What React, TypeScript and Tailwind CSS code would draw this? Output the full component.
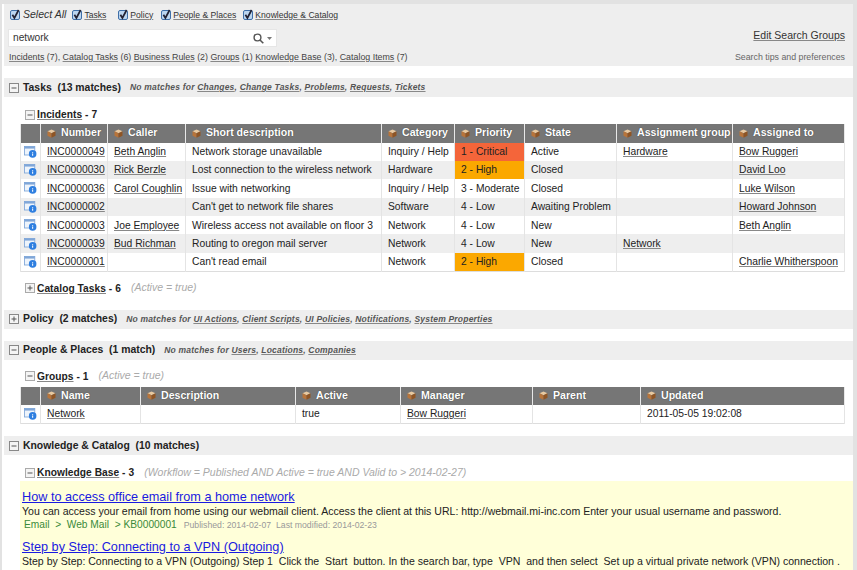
import React from "react";

const Check = () => (
  <svg width="10" height="10" viewBox="0 0 10 10" className="shrink-0 overflow-visible">
    <rect x="0.5" y="0.5" width="9" height="9" rx="1.5" fill="#bcd6f0" stroke="#3f6fa8" />
    <path d="M2.4 4.8 L4.4 8 L8.6 0" fill="none" stroke="#223" strokeWidth="1.7" />
  </svg>
);
const Toggle = ({ open, dim }: { open?: boolean; dim?: boolean }) => (
  <svg width="10" height="10" viewBox="0 0 10 10" className="shrink-0">
    <rect x="0.5" y="0.5" width="9" height="9" fill="#f4f4f4" stroke={dim ? "#aaa" : "#888"} />
    <path d={open ? "M2.5 5 H7.5" : "M2.5 5 H7.5 M5 2.5 V7.5"} stroke="#555" strokeWidth="1" />
  </svg>
);
const Cube = () => (
  <svg width="9" height="9" viewBox="0 0 9 9" className="shrink-0">
    <path d="M4.5 0.5 L8.5 2.3 L4.5 4.2 L0.5 2.3 Z" fill="#e9c9a0" />
    <path d="M0.5 2.3 L4.5 4.2 V8.8 L0.5 6.8 Z" fill="#b8743a" />
    <path d="M8.5 2.3 L4.5 4.2 V8.8 L8.5 6.8 Z" fill="#8f5524" />
  </svg>
);
const RecIcon = () => (
  <svg width="13" height="12" viewBox="0 0 15 14" className="block mx-auto">
    <rect x="0.5" y="0.5" width="12" height="10" fill="#eef4fb" stroke="#7fa6d8" />
    <rect x="0.5" y="0.5" width="12" height="2.5" fill="#7fa6d8" />
    <circle cx="10" cy="9.2" r="4.4" fill="#2f7fe0" />
    <path d="M10 7 V7.8 M10 8.8 V11.5" stroke="#fff" strokeWidth="1.2" />
  </svg>
);

const A = ({ children, className = "" }: { children: React.ReactNode; className?: string }) => (
  <span className={`underline decoration-[#888] ${className}`}>{children}</span>
);

const Th = ({ children }: { children?: React.ReactNode }) => (
  <th className="bg-[#767676] border-x border-[#e8e8e8] p-0 text-left font-bold text-white text-[10.6px] [text-shadow:0_0_1px_#333] h-[18.5px] whitespace-nowrap">
    {children && (
      <span className="flex items-center gap-[5px] pl-[6px]">
        <Cube />
        {children}
      </span>
    )}
  </th>
);

type Row = string[];
const incidents: Row[] = [
  ["INC0000049", "Beth Anglin", "Network storage unavailable", "Inquiry / Help", "1 - Critical", "Active", "Hardware", "Bow Ruggeri"],
  ["INC0000030", "Rick Berzle", "Lost connection to the wireless network", "Hardware", "2 - High", "Closed", "", "David Loo"],
  ["INC0000036", "Carol Coughlin", "Issue with networking", "Inquiry / Help", "3 - Moderate", "Closed", "", "Luke Wilson"],
  ["INC0000002", "", "Can't get to network file shares", "Software", "4 - Low", "Awaiting Problem", "", "Howard Johnson"],
  ["INC0000003", "Joe Employee", "Wireless access not available on floor 3", "Network", "4 - Low", "New", "", "Beth Anglin"],
  ["INC0000039", "Bud Richman", "Routing to oregon mail server", "Network", "4 - Low", "New", "Network", ""],
  ["INC0000001", "", "Can't read email", "Network", "2 - High", "Closed", "", "Charlie Whitherspoon"],
];

const Td = ({ children, className = "" }: { children?: React.ReactNode; className?: string }) => (
  <td className={`border-x border-[#e4e4e4] pl-[6px] pr-[3px] py-0 h-[18.4px] whitespace-nowrap overflow-hidden ${className}`}>{children}</td>
);

const priorityClass = (p: string) =>
  p.startsWith("1") ? "bg-[#f4653a]" : p.startsWith("2") ? "bg-[#fba800]" : "";

const SectionHead = ({ open, title, links }: { open?: boolean; title: string; links?: string[] }) => (
  <div className="ml-[2px] bg-[#eeeeee] h-[19px] flex items-center pl-[5px] whitespace-pre">
    <Toggle open={open} />
    <span className="ml-[4px] font-bold text-[10.4px] text-[#222]">{title}</span>
    {links && (
      <span className="ml-[9px] text-[8.5px] font-bold italic text-[#555] tracking-[0.2px]">
        No matches for{" "}
        {links.map((l, i) => (
          <React.Fragment key={l}>
            <A>{l}</A>
            {i < links.length - 1 ? ", " : ""}
          </React.Fragment>
        ))}
      </span>
    )}
  </div>
);

const SubHead = ({ open, title, count, filter }: { open?: boolean; title: string; count: string; filter?: string }) => (
  <div className="flex items-center pl-[23px] h-[17px] whitespace-nowrap">
    <Toggle open={open} dim />
    <span className="ml-[2px] font-bold text-[10.2px] text-[#222] tracking-[0.05px]">
      <A className="decoration-[#444]">{title}</A> - {count}
    </span>
    {filter && <span className="ml-[10px] italic text-[10.5px] text-[#aaa]">{filter}</span>}
  </div>
);

export default function App() {
  return (
    <div
      className="w-[857px] h-[570px] overflow-hidden bg-[#e2e2e2] pt-[4px] pl-[2px] pr-[4px] text-[#222] text-[10.3px]"
      style={{ fontFamily: '"Liberation Sans", Arial, sans-serif' }}
    >
      <div className="bg-white h-[566px] overflow-hidden">
        {/* Search panel */}
        <div className="ml-[2px] bg-[#eeeeee] h-[62px] pl-[4px] pr-[8px] flex justify-between">
          <div>
            <div className="flex items-center h-[21px] pl-[2px] pt-[1px] text-[8.6px] text-[#333]">
              <Check />
              <span className="ml-[3px] italic text-[10.5px] mr-[6px]">Select All</span>
              <Check />
              <A className="ml-[2px] mr-[12px]">Tasks</A>
              <Check />
              <A className="ml-[2px] mr-[8px]">Policy</A>
              <Check />
              <A className="ml-[2px] mr-[7px]">People &amp; Places</A>
              <Check />
              <A className="ml-[2px]">Knowledge &amp; Catalog</A>
            </div>
            <div className="mt-[4px] bg-white w-[269px] h-[18px] flex items-center justify-between pl-[4px] pr-[3px] text-[10.2px] text-[#333] border border-[#e6e6e6]">
              <span>network</span>
              <span className="flex items-center gap-[3px] pr-[1px]">
                <svg width="11" height="11" viewBox="0 0 11 11">
                  <circle cx="4.5" cy="4.5" r="3.4" fill="none" stroke="#555" strokeWidth="1.4" />
                  <path d="M7 7 L10.3 10.3" stroke="#555" strokeWidth="1.6" />
                </svg>
                <svg width="5" height="3" viewBox="0 0 5 3">
                  <path d="M0 0 H5 L2.5 3 Z" fill="#777" />
                </svg>
              </span>
            </div>
            <div className="mt-[4px] pl-[1px] text-[8.85px] text-[#444] whitespace-nowrap">
              <A>Incidents</A> (7), <A>Catalog Tasks</A> (6) <A>Business Rules</A> (2) <A>Groups</A> (1) <A>Knowledge Base</A> (3), <A>Catalog Items</A> (7)
            </div>
          </div>
          <div className="text-right pt-[24px]">
            <A className="text-[10.5px] text-[#333] decoration-[#666]">Edit Search Groups</A>
            <div className="mt-[7px] text-[8.8px] text-[#666]">Search tips and preferences</div>
          </div>
        </div>

        <div className="h-[12px]" />
        <SectionHead open title="Tasks  (13 matches)" links={["Changes", "Change Tasks", "Problems", "Requests", "Tickets"]} />
        <div className="h-[9px]" />
        <SubHead open title="Incidents" count="7" />
        <div className="pl-[18px] mt-[1px]">
          <table className="table-fixed border-collapse w-[824px]">
            <colgroup>
              {[20, 67, 78, 196, 73, 70, 92, 116, 112].map((w, i) => (
                <col key={i} style={{ width: w }} />
              ))}
            </colgroup>
            <thead>
              <tr>
                <Th />
                <Th>Number</Th>
                <Th>Caller</Th>
                <Th>Short description</Th>
                <Th>Category</Th>
                <Th>Priority</Th>
                <Th>State</Th>
                <Th>Assignment group</Th>
                <Th>Assigned to</Th>
              </tr>
            </thead>
            <tbody className="border-b border-[#ddd]">
              {incidents.map((r, i) => (
                <tr key={r[0]} className={i % 2 ? "bg-[#eeeeee]" : "bg-white"}>
                  <td className="border-x border-[#e4e4e4] p-0"><RecIcon /></td>
                  <Td className="pl-[5px]"><A>{r[0]}</A></Td>
                  <Td>{r[1] && <A>{r[1]}</A>}</Td>
                  <Td>{r[2]}</Td>
                  <Td>{r[3]}</Td>
                  <Td className={priorityClass(r[4])}>{r[4]}</Td>
                  <Td>{r[5]}</Td>
                  <Td>{r[6] && <A>{r[6]}</A>}</Td>
                  <Td>{r[7] && <A>{r[7]}</A>}</Td>
                </tr>
              ))}
            </tbody>
          </table>
        </div>
        <div className="h-[8px]" />
        <SubHead title="Catalog Tasks" count="6" filter="(Active = true)" />
        <div className="h-[13px]" />
        <SectionHead title="Policy  (2 matches)" links={["UI Actions", "Client Scripts", "UI Policies", "Notifications", "System Properties"]} />
        <div className="h-[12px]" />
        <SectionHead open title="People & Places  (1 match)" links={["Users", "Locations", "Companies"]} />
        <div className="h-[8px]" />
        <SubHead open title="Groups" count="1" filter="(Active = true)" />
        <div className="pl-[18px] mt-[2px]">
          <table className="table-fixed border-collapse w-[824px]">
            <colgroup>
              {[20, 100, 155, 105, 132, 108, 204].map((w, i) => (
                <col key={i} style={{ width: w }} />
              ))}
            </colgroup>
            <thead>
              <tr>
                <Th />
                <Th>Name</Th>
                <Th>Description</Th>
                <Th>Active</Th>
                <Th>Manager</Th>
                <Th>Parent</Th>
                <Th>Updated</Th>
              </tr>
            </thead>
            <tbody className="border-b border-[#ddd]">
              <tr>
                <td className="border-x border-[#e4e4e4] p-0"><RecIcon /></td>
                <Td className="pl-[5px]"><A>Network</A></Td>
                <Td />
                <Td>true</Td>
                <Td><A>Bow Ruggeri</A></Td>
                <Td />
                <Td>2011-05-05 19:02:08</Td>
              </tr>
            </tbody>
          </table>
        </div>
        <div className="h-[12px]" />
        <SectionHead open title="Knowledge & Catalog  (10 matches)" />
        <div className="h-[9px]" />
        <SubHead open title="Knowledge Base" count="3" filter="(Workflow = Published AND Active = true AND Valid to > 2014-02-27)" />
        <div className="ml-[18px] bg-[#ffffd9] pl-[2px] pt-[9px] h-[100px] whitespace-nowrap overflow-hidden">
          <div className="text-[12.7px] leading-[15px] text-[#1a1ae0] underline">How to access office email from a home network</div>
          <div className="text-[10.55px] leading-[13px] text-[#222]">You can access your email from home using our webmail client. Access the client at this URL: http://webmail.mi-inc.com Enter your usual username and password.</div>
          <div className="text-[10.2px] leading-[14px] text-[#3a8a3a] pl-[2px]">
            Email&nbsp; &gt;&nbsp; Web Mail&nbsp; &gt; KB0000001
            <span className="ml-[7px] text-[8.7px] text-[#999]">Published: 2014-02-07&nbsp; Last modified: 2014-02-23</span>
          </div>
          <div className="mt-[7px] text-[12.7px] leading-[16px] text-[#1a1ae0] underline">Step by Step: Connecting to a VPN (Outgoing)</div>
          <div className="text-[10.55px] leading-[13px] text-[#222]">Step by Step: Connecting to a VPN (Outgoing) Step 1&nbsp; Click the&nbsp; Start&nbsp; button. In the search bar, type&nbsp; VPN&nbsp; and then select&nbsp; Set up a virtual private network (VPN) connection .</div>
        </div>
      </div>
    </div>
  );
}
